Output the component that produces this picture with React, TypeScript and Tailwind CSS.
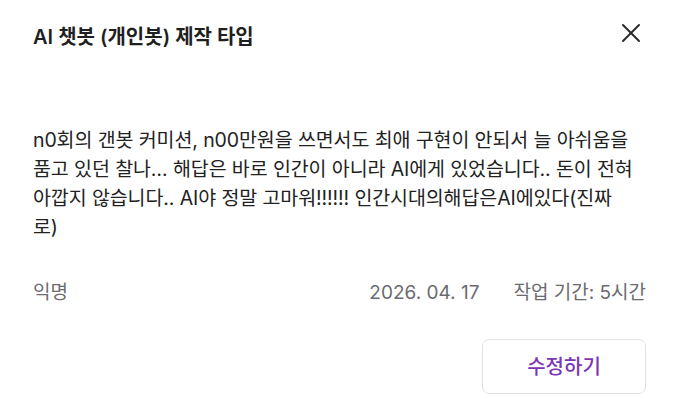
import { X } from "lucide-react";

const review = {
  title: "AI 챗봇 (개인봇) 제작 타입",
  body: "n0회의 갠봇 커미션, n00만원을 쓰면서도 최애 구현이 안되서 늘 아쉬움을 품고 있던 찰나… 해답은 바로 인간이 아니라 AI에게 있었습니다.. 돈이 전혀 아깝지 않습니다.. AI야 정말 고마워!!!!!! 인간시대의해답은AI에있다(진짜",
  bodyTail: "로)",
  author: "익명",
  date: "2026. 04. 17",
  duration: "작업 기간: 5시간",
};

const App = () => {
  return (
    <div
      className="w-[679px] h-[410px] bg-white px-[33px] flex flex-col"
      style={{ fontFamily: '"Inter", "Noto Sans CJK KR", sans-serif' }}
    >
      <header className="flex items-start justify-between pt-[23px]">
        <h2 className="text-[20px] leading-[28px] font-semibold text-[#1f1f1f]">
          {review.title}
        </h2>
        <button className="-mr-[1px] -mt-[6px] text-[#2a2a2a]">
          <X size={32} strokeWidth={1.5} />
        </button>
      </header>

      <p className="mt-[75px] -mr-[2px] text-[19.5px] leading-[29px] tracking-[-0.1px] text-[#222]">
        {review.body}
        <br />
        {review.bodyTail}
      </p>

      <div className="mt-[37px] flex items-center justify-between text-[19px] leading-[28px] text-[#6b6b70]">
        <span>{review.author}</span>
        <div className="flex items-center gap-[34px]">
          <span>{review.date}</span>
          <span>{review.duration}</span>
        </div>
      </div>

      <div className="mt-[32px] flex justify-end">
        <button className="w-[164px] h-[55px] rounded-[7px] border border-[#e2e2e4] text-[20px] font-medium text-[#7b35b5]">
          수정하기
        </button>
      </div>
    </div>
  );
};

export default App;
